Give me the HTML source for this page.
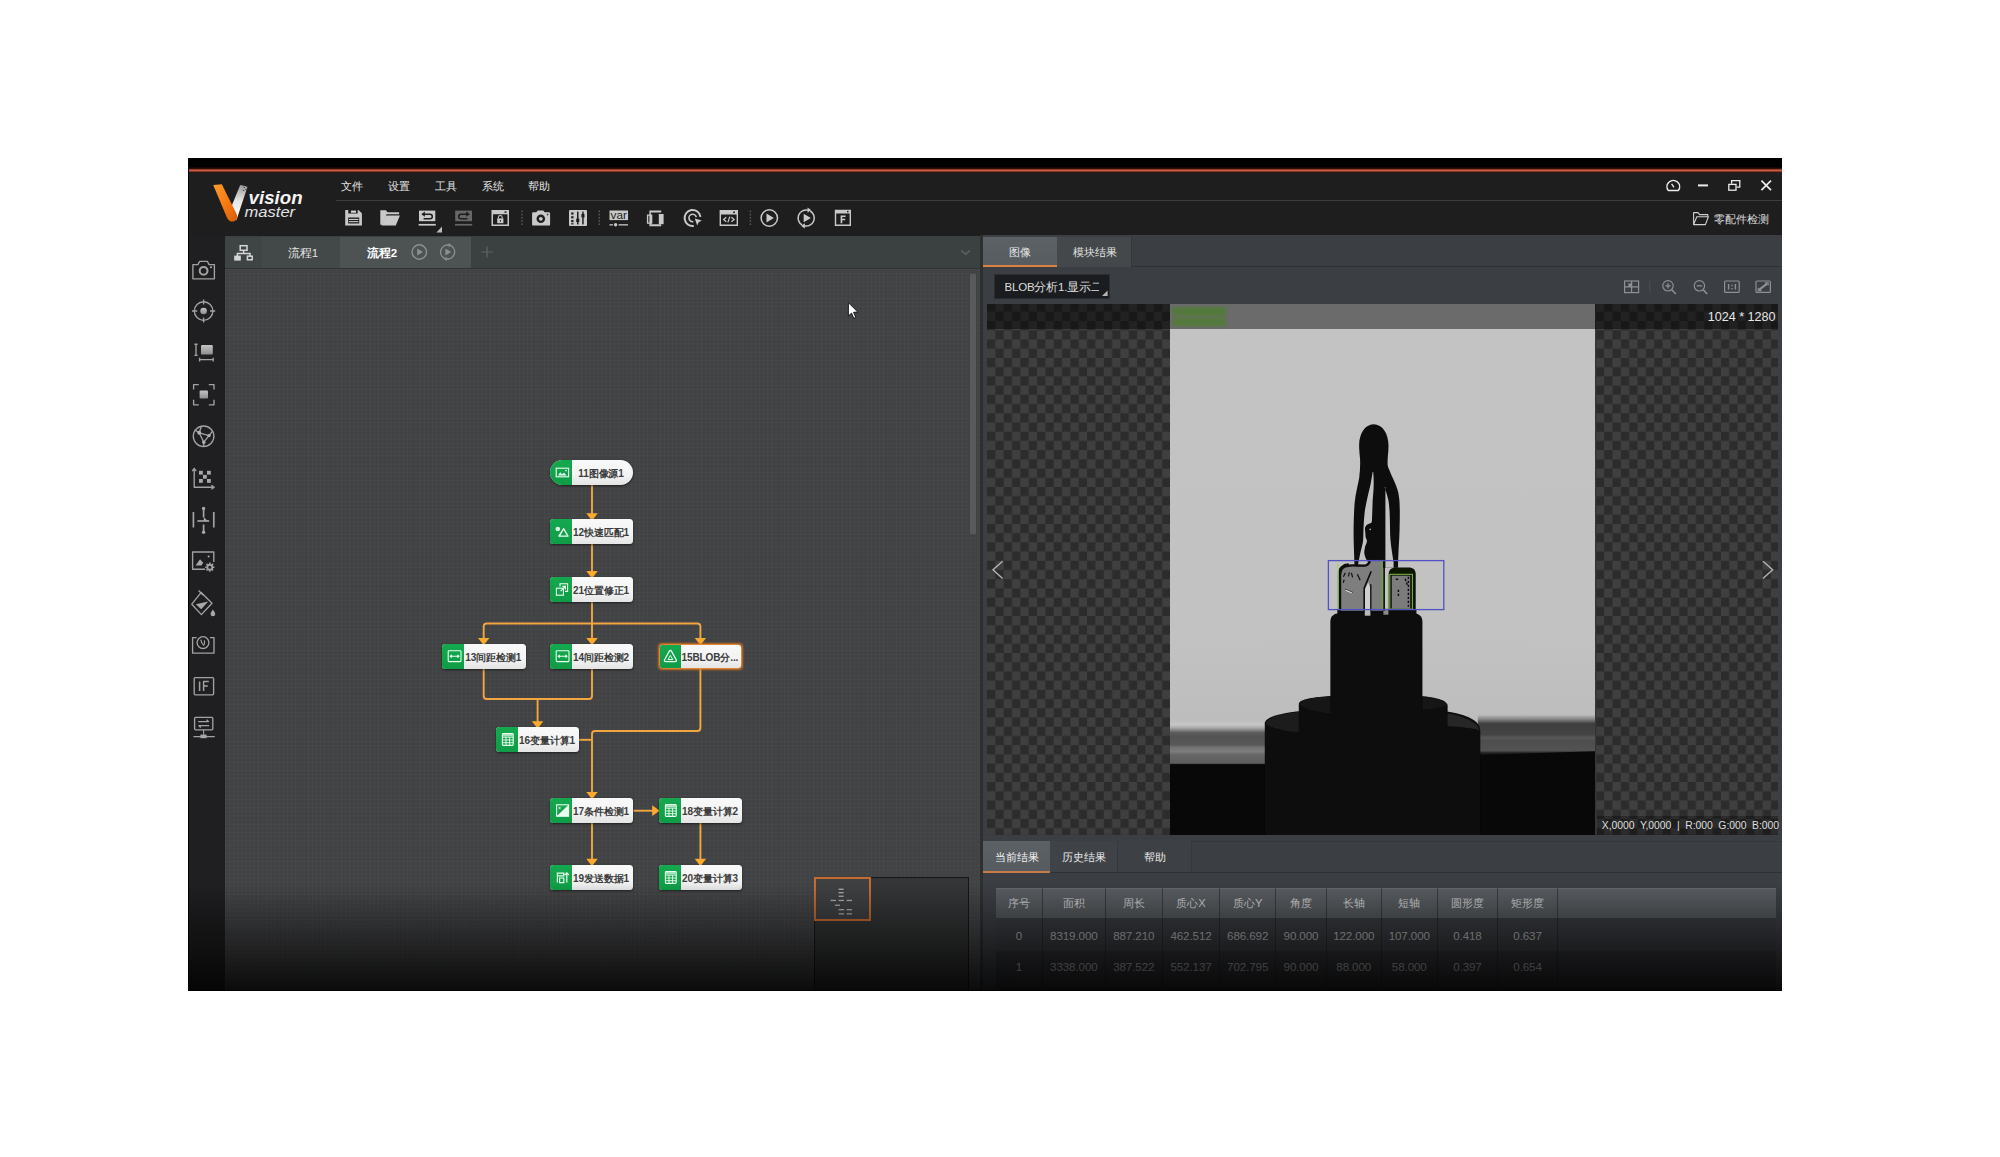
<!DOCTYPE html>
<html lang="zh">
<head>
<meta charset="utf-8">
<title>VisionMaster</title>
<style>
*{box-sizing:border-box;margin:0;padding:0}
html,body{width:2000px;height:1157px;background:#fff;overflow:hidden}
body{font-family:"Liberation Sans",sans-serif;position:relative;color:#ddd}
.abs{position:absolute}
#app{position:absolute;left:188px;top:158px;width:1594px;height:832.5px;background:#1e1e1f;overflow:hidden}
/* everything inside #app is positioned in page coords via this wrapper */
#w{position:absolute;left:-188px;top:-158px;width:2000px;height:1157px}
#topblack{left:188px;top:158px;width:1594px;height:10px;background:#000}
#topline{left:188px;top:167px;width:1594px;height:6px;background:linear-gradient(#000 0%,#3a1108 30%,#d9634a 52%,#c9573f 66%,#45170d 82%,#1e1e1f 100%)}
#hdr{left:188px;top:172px;width:1594px;height:64px;background:#1e1e1f}
#menusep{left:336px;top:199.5px;width:1446px;height:1px;background:#3d3d3d}
.menu{top:179px;height:15px;line-height:15px;font-size:11px;color:#e4e4e4;white-space:nowrap}
#side{left:188px;top:236px;width:37px;height:756px;background:#1f1f21}
#ltabs{left:225px;top:236px;width:754.5px;height:33px;background:#3b4040;border-bottom:1px solid #2f3333}
#canvas{left:225px;top:269px;width:754.5px;height:722px;background-color:#414244;
 background-image:linear-gradient(rgba(255,255,255,.025) 1px,transparent 1px),linear-gradient(90deg,rgba(255,255,255,.025) 1px,transparent 1px);background-size:4.15px 4.15px}
#split{left:979.5px;top:235px;width:3.5px;height:756px;background:#2d2f31}
#rpanel{left:983px;top:235px;width:799px;height:756px;background:#3b3e43}
#rtabs{left:983px;top:235px;width:799px;height:32px;background:#3b3e43;border-bottom:1px solid #2e3035}
.tab{top:237px;height:30px;line-height:30px;text-align:center;font-size:11px;color:#e6e6e6}
#imgarea{left:986.6px;top:304.3px;width:791.8px;height:530.7px;overflow:hidden;
 background:#2c2c2c}
#fade{left:188px;top:884px;width:1594px;height:107px;background:linear-gradient(rgba(0,0,0,0),rgba(0,0,0,.84));pointer-events:none}
</style>
</head>
<body>
<div id="app"><div id="w">
 <div id="topblack" class="abs"></div>
 <div id="hdr" class="abs"></div>
 <div id="topline" class="abs"></div>
 <div id="menusep" class="abs"></div>
 <div class="abs menu" style="left:341px">文件</div>
 <div class="abs menu" style="left:388px">设置</div>
 <div class="abs menu" style="left:435px">工具</div>
 <div class="abs menu" style="left:481.5px">系统</div>
 <div class="abs menu" style="left:528px">帮助</div>
 <!--LOGO-->
 <svg class="abs" style="left:0;top:0" width="2000" height="1157" viewBox="0 0 2000 1157">
  <defs>
   <linearGradient id="lgO" x1="0" y1="0" x2="1" y2="1"><stop offset="0" stop-color="#ff9a2a"/><stop offset=".55" stop-color="#f57a12"/><stop offset="1" stop-color="#d45a08"/></linearGradient>
   <linearGradient id="lgW" x1="0" y1="1" x2="0" y2="0"><stop offset="0" stop-color="#ffffff"/><stop offset=".55" stop-color="#e6e6e6"/><stop offset="1" stop-color="#9a9a9a"/></linearGradient>
  </defs>
  <!-- logo -->
  <g>
   <path d="M247.6 186.6 L240.2 184.9 L230.4 209 L236.4 220.2 Z" fill="url(#lgW)"/>
   <path d="M213.2 185.0 L221.8 184.2 L236.6 214.0 C238.2 218.4 236.0 221.6 232.6 221.6 C229.6 221.6 228.2 220.2 226.8 217.2 Z" fill="url(#lgO)"/>
   <path d="M243.5 187 l1.6 .9 M246 186 l1.6 .9 M242.6 190 l1.6 .9 M245.2 189.3 l1.6 .9" stroke="#1e1e1f" stroke-width=".8"/>
   <text x="248.6" y="204.4" font-family="Liberation Sans, sans-serif" font-style="italic" font-weight="bold" font-size="18.6" fill="#f4f4f4" textLength="54" lengthAdjust="spacingAndGlyphs">vision</text>
   <text x="244.6" y="216.6" font-family="Liberation Sans, sans-serif" font-style="italic" font-size="15.2" fill="#e2e2e2" textLength="50.5" lengthAdjust="spacingAndGlyphs">master</text>
  </g>
  <!-- toolbar icons -->
  <g fill="#c9c9c9" stroke="none">
   <!-- save -->
   <path d="M345.2 210h13.2l3.5 3.3v12.3h-16.7z M348.3 210v3.4h9.4v-3.4z M348.2 217.6v5.8h11v-5.8z" fill-rule="evenodd"/>
   <rect x="349" y="218.9" width="9.4" height="1.1"/><rect x="349" y="221.1" width="9.4" height="1.1"/>
   <rect x="351" y="210.6" width="5" height="2.1" fill="#d8d8d8"/>
   <!-- folder -->
   <path d="M380.3 210.3h5.6l1.6 1.9h11.6v2h-12.6l-4.2 10.6h-2z"/>
   <path d="M385.6 215.4h14.3l-4.1 10.2h-14.2z"/>
   <!-- undo -->
   <rect x="419" y="210.6" width="16.3" height="10.6"/>
   <rect x="418.6" y="223.9" width="17.2" height="1.7"/>
   <path d="M422.4 214.2h7.6a2.3 2.3 0 0 1 0 4.6h-6.4" fill="none" stroke="#1e1e1f" stroke-width="1.5"/>
   <path d="M424.9 211.6l-3.6 2.6 3.6 2.6z" fill="#1e1e1f"/>
   <path d="M442 226.4v6.2h-5.6z" fill="#bdbdbd"/>
   <!-- redo (disabled) -->
   <g fill="#676767"><rect x="455.2" y="210.6" width="16.8" height="10.6"/><rect x="455" y="223.9" width="17.2" height="1.7"/></g>
   <path d="M468.6 214.2h-7.6a2.3 2.3 0 0 0 0 4.6h6.4" fill="none" stroke="#1e1e1f" stroke-width="1.5"/>
   <path d="M466.2 211.6l3.6 2.6-3.6 2.6z" fill="#1e1e1f"/>
   <!-- lock window -->
   <path d="M491.5 210h17.5v15.9h-17.5z M493 214.2v10.2h14.5v-10.2z" fill-rule="evenodd"/>
   <rect x="504.6" y="211.3" width="1.8" height="1.6" fill="#1e1e1f"/>
   <rect x="497.2" y="218.4" width="6.2" height="4.8"/>
   <path d="M498.4 218.6v-1.2a1.9 1.9 0 0 1 3.8 0v1.2" fill="none" stroke="#c9c9c9" stroke-width="1.1"/>
   <rect x="499.9" y="220" width=".9" height="1.8" fill="#1e1e1f"/>
   <!-- camera -->
   <path d="M532.1 213.4q0-1.2 1.2-1.2h3l1.4-1.8h5.6l1.4 1.8h4.2q1.2 0 1.2 1.2v11q0 1.2-1.2 1.2h-15.6q-1.2 0-1.2-1.200z"/>
   <circle cx="540.8" cy="218.8" r="4.3" fill="#1e1e1f"/><circle cx="540.8" cy="218.8" r="1.9"/>
   <circle cx="547.6" cy="214.6" r=".8" fill="#1e1e1f"/>
   <!-- sliders -->
   <rect x="569" y="210" width="18" height="15.9" rx="1"/>
   <g fill="#1e1e1f"><rect x="571.2" y="212.4" width="2.3" height="2.2"/><rect x="571.2" y="216.2" width="2.3" height="2.2"/><rect x="571.2" y="220" width="2.3" height="2.2"/><rect x="571.2" y="223.2" width="2.3" height="1.2"/>
    <rect x="577" y="211.6" width="1.5" height="12.8"/><rect x="582.2" y="211.6" width="1.5" height="12.8"/><rect x="576.2" y="218.6" width="3.1" height="3.4"/><rect x="581.4" y="214" width="3.1" height="3.4"/></g>
   <!-- var -->
   <rect x="609.5" y="210.5" width="18.5" height="9.6"/>
   <text x="610.6" y="218.6" font-family="Liberation Sans, sans-serif" font-size="10.5" fill="#1e1e1f" textLength="16.4" lengthAdjust="spacingAndGlyphs">var</text>
   <rect x="609.5" y="224.2" width="3.4" height="1.3"/><circle cx="615.6" cy="224.8" r="1.7"/><rect x="618.6" y="224.2" width="9.4" height="1.3"/>
   <!-- device -->
   <path d="M649.4 210.6h11.8v2h-10.3v11.6h10.300v2.100h-11.800z"/>
   <path d="M646.900 214.4h5.400v9.400h-5.400z M648.300 215.800v6.600h1.700v-6.600z" fill-rule="evenodd"/>
   <rect x="658.800" y="214" width="4.800" height="10.200"/>
   <!-- target cursor -->
   <path d="M700.500 216.800 A8 8 0 1 0 693.800 225.900" fill="none" stroke="#c9c9c9" stroke-width="2"/>
   <path d="M696.300 217.200 A3.700 3.700 0 1 0 693.300 221.600" fill="none" stroke="#c9c9c9" stroke-width="1.600"/>
   <path d="M694.800 218.600l7 1.900-3.100 1.700-1.500 3.400z"/>
   <!-- code window -->
   <path d="M719.600 210.100h18.400v15.800h-18.400z M721 214.600v9.900h15.600v-9.900z" fill-rule="evenodd"/>
   <rect x="733.200" y="211.500" width="1.700" height="1.600" fill="#1e1e1f"/>
   <path d="M726.300 217.200l-2.700 2.300 2.700 2.300 M731.400 217.200l2.700 2.300-2.700 2.300 M729.800 216.600l-1.900 5.800" fill="none" stroke="#c9c9c9" stroke-width="1.250"/>
   <!-- play -->
   <circle cx="769.300" cy="218" r="8.200" fill="none" stroke="#c9c9c9" stroke-width="1.500"/>
   <path d="M766.500 213.600l7.400 4.400-7.400 4.400z"/>
   <!-- loop play -->
   <path d="M802.15 225.01 A8.1 8.1 0 0 1 808.02 210.11 M810.25 210.99 A8.1 8.1 0 0 1 804.38 225.89" fill="none" stroke="#c9c9c9" stroke-width="1.500"/>
   <path d="M807.52 207.41l3.65 2.70l-3.65 2.56z M804.88 228.59l-3.65 -2.70l3.65 -2.56z"/>
   <path d="M803.700 213.700l7.200 4.300-7.200 4.300z"/>
   <!-- F window -->
   <path d="M834.800 209.700h16.200v16.200h-16.200z M836.200 213.600v10.900h13.400v-10.900z" fill-rule="evenodd"/>
   <rect x="847" y="210.900" width="1.500" height="1.500" fill="#1e1e1f"/>
   <path d="M840.600 215.600h5v1.500h-3.300v1.700h2.900v1.400h-2.900v3h-1.700z"/>
  </g>
  <!-- dotted separators -->
  <g fill="#5a5a5a">
   <rect x="521.300" y="210.600" width="1.400" height="1.600"/><rect x="521.300" y="213.800" width="1.400" height="1.600"/><rect x="521.300" y="217" width="1.400" height="1.600"/><rect x="521.300" y="220.200" width="1.400" height="1.600"/><rect x="521.300" y="223.400" width="1.400" height="1.600"/>
   <rect x="598.600" y="210.600" width="1.400" height="1.600"/><rect x="598.600" y="213.800" width="1.400" height="1.600"/><rect x="598.600" y="217" width="1.400" height="1.600"/><rect x="598.600" y="220.200" width="1.400" height="1.600"/><rect x="598.600" y="223.400" width="1.400" height="1.600"/>
   <rect x="749.700" y="210.600" width="1.400" height="1.600"/><rect x="749.700" y="213.800" width="1.400" height="1.600"/><rect x="749.700" y="217" width="1.400" height="1.600"/><rect x="749.700" y="220.200" width="1.400" height="1.600"/><rect x="749.700" y="223.400" width="1.400" height="1.600"/>
  </g>
 </svg>
 <!--TOOLBAR-->
 <!--WINCTRL-->
 <svg class="abs" style="left:0;top:0" width="2000" height="1157" viewBox="0 0 2000 1157">
  <g fill="none" stroke="#ececec" stroke-width="1.500">
   <!-- gauge -->
   <path d="M1668.200 190.400h10.200a6.300 6.300 0 1 0-10.200 0z" stroke-linejoin="round"/>
   <path d="M1671.600 183.800l2.400 3.600" stroke-width="1.300"/>
   <!-- minimize -->
   <path d="M1698 185.400h10" stroke-width="2"/>
   <!-- restore -->
   <rect x="1728.800" y="184.400" width="7.200" height="5.800" stroke-width="1.300"/>
   <path d="M1731.600 183.800v-3.200h8.200v6.600h-3.200" stroke-width="1.300"/>
   <!-- close -->
   <path d="M1761.400 180.600l9.600 9.600 M1771 180.600l-9.600 9.600" stroke-width="1.700"/>
   <!-- folder -->
   <path d="M1693.600 224.600v-12h4.400l1.600 2h8.200v2.200 M1693.600 224.600l3.200-7.800h11.600l-3 7.800z" stroke="#d0d0d0" stroke-width="1.100" stroke-linejoin="round"/>
  </g>
 </svg>
 <div class="abs" style="left:1714px;top:211.500px;height:15px;line-height:15px;font-size:11px;color:#dcdcdc;white-space:nowrap">零配件检测</div>
 <div id="side" class="abs"></div>
 <!--SIDEICONS-->
 <svg class="abs" style="left:0;top:0" width="2000" height="1157" viewBox="0 0 2000 1157">
  <defs><linearGradient id="sg" x1="0" y1="0" x2="0" y2="1"><stop offset="0" stop-color="#c4c4c4"/><stop offset="1" stop-color="#8c8c8c"/></linearGradient></defs>
  <g fill="none" stroke="#a2a2a2" stroke-width="1.35" stroke-linejoin="round">
   <!-- camera -->
   <path d="M192.900 264.600h5l1.800-3.300h7.600l1.800 3.300h5.300v14.200h-21.500z"/>
   <circle cx="203.600" cy="270.800" r="3.900" stroke-width="2"/>
   <circle cx="211" cy="267.200" r=".9" fill="#cfcfcf" stroke="none"/>
   <!-- target -->
   <circle cx="203.600" cy="311" r="9.300"/>
   <path d="M203.600 299.400v5.200 M203.600 317.400v5.200 M192 311h5.200 M210 311h5.200"/>
   <circle cx="203.600" cy="311" r="3.300" fill="url(#sg)" stroke="none"/>
   <!-- measure -->
   <path d="M194.400 344.200h3.200 M194.400 355.400h3.200 M196 344.200v11.200 M199.600 357.800v3.600 M213.200 357.800v3.600 M199.600 359.600h13.600"/>
   <rect x="201" y="345" width="11.800" height="9.600" rx="1.200" fill="url(#sg)" stroke="none"/>
   <!-- focus -->
   <path d="M193.600 389.600v-5h5.200 M208.800 384.600h5.200v5 M214 399.800v5h-5.200 M198.800 404.800h-5.200v-5"/>
   <rect x="199.600" y="390.400" width="8.400" height="8.200" rx="1" fill="url(#sg)" stroke="none"/>
   <!-- globe nodes -->
   <circle cx="203.600" cy="436.300" r="10.300"/>
   <path d="M199.200 432.800l9.800 2.800-5.200 6.600z M199.200 432.800l-4.600-3 M209 435.600l3.800-4.600 M203.800 442.200l-.2 4 M199.200 432.800l2-6"/>
   <circle cx="199.200" cy="432.800" r="2" fill="#b0b0b0" stroke="none"/><circle cx="209" cy="435.600" r="1.700" fill="#b0b0b0" stroke="none"/><circle cx="203.800" cy="442.200" r="1.700" fill="#b0b0b0" stroke="none"/>
   <!-- axes checker -->
   <path d="M194.200 469v18.200h18.800 M192.200 471.200l2-2.800 2 2.800 M211.400 485.200l2.800 2-2.800 2"/>
   <g fill="#a8a8a8" stroke="none"><rect x="199" y="470.800" width="3.800" height="3.800"/><rect x="207" y="470.800" width="3.800" height="3.800"/><rect x="203" y="474.900" width="3.800" height="3.800"/><rect x="199" y="479" width="3.800" height="3.800"/><rect x="207" y="479" width="3.800" height="3.800"/></g>
   <!-- align -->
   <path d="M193.400 512v15.600 M213.800 512v15.600" stroke-width="1.700"/>
   <path d="M203.600 509v8.600 M203.600 524.400v7.200" stroke-width="1.700"/>
   <path d="M197.400 521h11.800" stroke-width="1.700"/>
   <path d="M203.800 517.200l4 3.800h-4z" fill="#a8a8a8" stroke="none"/>
   <circle cx="203.600" cy="508.400" r="1.700" fill="#a8a8a8" stroke="none"/><circle cx="203.600" cy="532.200" r="1.700" fill="#a8a8a8" stroke="none"/>
   <!-- image settings -->
   <path d="M205.200 569.200h-12.600v-17.200h21.200v10"/>
   <path d="M195.600 565.600l4.400-6.400 3.200 3.600-1.800 2.800z" fill="#a8a8a8" stroke="none"/>
   <circle cx="208.600" cy="556.600" r="1" fill="#a8a8a8" stroke="none"/>
   <circle cx="209.800" cy="567.200" r="2.500" stroke-width="1.900"/>
   <path d="M209.800 562.600v1.600 M209.800 570.200v1.600 M205.200 567.200h1.600 M212.800 567.200h1.600 M206.500 563.900l1.200 1.200 M211.900 569.300l1.200 1.200 M213.100 563.900l-1.200 1.200 M207.700 569.300l-1.200 1.200" stroke-width="1.500"/>
   <!-- bucket -->
   <path d="M201.200 592.400l10.800 10.800-10.600 11.400-9.600-10.400z M198.600 590.600l4.600 4.600"/>
   <path d="M195.800 604.200l12.400-2.600-7 7.600z" fill="#a8a8a8" stroke="none"/>
   <path d="M212.900 609.600c1.400 2.200 2.300 3.200 2.300 4.400a2.300 2.300 0 0 1-4.600 0c0-1.200.9-2.200 2.300-4.400z" fill="#a8a8a8" stroke="none"/>
   <!-- clock cam -->
   <path d="M196.600 637.600h-4v15.600h21.400v-15.600h-4"/>
   <circle cx="203" cy="642.600" r="5.900"/>
   <path d="M200.800 639.600c.4 2.800 1.400 4.600 3 5.600.8-1.200 1-3 .6-4.800" stroke-width="1.200"/>
   <!-- IF -->
   <rect x="194.200" y="677.600" width="19.400" height="17.200" rx="1"/>
   <path d="M199.600 681.600v9.400 M203.600 691v-9.400h5.200 M203.600 686h4.200" stroke-width="1.500"/>
   <!-- network -->
   <rect x="194.600" y="717.400" width="18.200" height="12.400" rx="1"/>
   <path d="M198.200 721.600h10.400l-2-1.900 M209.200 725.600h-10.400l2 1.900" stroke-width="1.300"/>
   <path d="M203.600 729.800v5 M193.400 736.600h21.400" stroke-width="1.100"/>
   <rect x="200.400" y="734.600" width="6.200" height="3.600" fill="#a8a8a8" stroke="none"/>
  </g>
 </svg>
 <div id="ltabs" class="abs"></div>
 <!--LTABS-->
 <div class="abs" style="left:225px;top:236.5px;width:37px;height:31.5px;background:#3f4444"></div>
 <div class="abs" style="left:262px;top:236.5px;width:78px;height:31.5px;background:#434848"></div>
 <div class="abs" style="left:340px;top:236.5px;width:130.5px;height:31.5px;background:#4d5252"></div>
 <div class="abs" style="left:262px;top:244.8px;width:78px;height:16px;line-height:16px;font-size:11.5px;color:#e2e2e2;text-align:center;padding-left:4px">流程1</div>
 <div class="abs" style="left:362px;top:244.8px;width:40px;height:16px;line-height:16px;font-size:11.5px;color:#fff;font-weight:bold;text-align:center;white-space:nowrap">流程2</div>
 <svg class="abs" style="left:0;top:0" width="2000" height="1157" viewBox="0 0 2000 1157">
  <!-- tree icon -->
  <g fill="none" stroke="#d6d6d6" stroke-width="1.5">
   <rect x="240.200" y="245.700" width="6.800" height="4.600"/>
   <path d="M243.600 250.300v3.200 M237.400 256v-2.500h12.600v2.500"/>
   <rect x="247.400" y="256.200" width="4.800" height="3.600"/>
  </g>
  <rect x="234.200" y="255.600" width="6.600" height="5" fill="#d6d6d6"/>
  <!-- play / loop -->
  <g fill="none" stroke="#8c9090" stroke-width="1.400">
   <circle cx="419.300" cy="252" r="7.200"/>
   <path d="M444.10 258.06 A7 7 0 0 1 449.17 245.18 M451.10 245.94 A7 7 0 0 1 446.03 258.82"/>
  </g>
  <g fill="#8c9090"><path d="M417.200 248.400l5.800 3.600-5.800 3.600z"/><path d="M445.400 248.400l5.800 3.600-5.800 3.600z"/><path d="M448.67 242.88l3.10 2.30l-3.10 2.18z M446.53 261.12l-3.10 -2.30l3.10 -2.18z"/></g>
  <path d="M481.400 252h11.200 M487 246.400v11.200" stroke="#5f6464" stroke-width="1.200"/>
  <path d="M961.200 250.400l4.400 4 4.400-4" fill="none" stroke="#5a5f5f" stroke-width="1.500"/>
 </svg>
 <div id="canvas" class="abs"></div>
 <!--FLOW-->
 <style>.nd{position:absolute;width:83.600px;height:24.700px;border-radius:3.500px;background:linear-gradient(#f9f9f9 0%,#f3f3f3 60%,#e4e4e4 100%);box-shadow:0 1px 2.500px rgba(0,0,0,.55);overflow:hidden}.nd.pill{border-radius:12.400px}.nd.sel{width:83px;height:25px;border:1.300px solid #e38634;box-shadow:0 0 2px 0.300px rgba(226,121,28,.8)}.nd i{position:absolute;left:0;top:0;width:22.200px;height:100%;background:linear-gradient(#14a94f,#0f9c46)}.nd svg{position:absolute;left:0;top:0}.nd b{position:absolute;left:22.200px;top:0;width:58px;height:100%;line-height:27.400px;font-size:10px;font-weight:bold;color:#3c3c3c;text-align:center;white-space:nowrap;letter-spacing:-.100px}.nd.sel b{line-height:25.200px;left:20.900px}.nd.sel i{width:20.900px}.nd.sel svg{left:-1.300px;top:-1.200px}</style>
 <svg class="abs" style="left:0;top:0" width="2000" height="1157" viewBox="0 0 2000 1157"><g fill="none" stroke="#f3a640" stroke-width="1.900"><path d="M592 485V519"/><path d="M592 544V577"/><path d="M592 602V644"/><path d="M592 623.500H486.700a3 3 0 0 0-3 3V644"/><path d="M592 623.500H697.400a3 3 0 0 1 3 3V644"/><path d="M483.700 668.500V696a3 3 0 0 0 3 3H589a3 3 0 0 0 3-3V668.500"/><path d="M537.600 699V727"/><path d="M700.400 668.500V728a3 3 0 0 1-3 3H595a3 3 0 0 0-3 3V798"/><path d="M579 739.800H592"/><path d="M592 822.500V865"/><path d="M700.400 822.500V865"/><path d="M633.500 810.700H654"/></g><g fill="#fbaa2e"><path d="M586.3 513.3h11.400L592.0 520.7z"/><path d="M586.3 571.0h11.400L592.0 578.4z"/><path d="M586.3 637.9h11.400L592.0 645.3z"/><path d="M478.0 637.9h11.400L483.7 645.3z"/><path d="M694.7 637.9h11.400L700.4 645.3z"/><path d="M531.9 721.3h11.400L537.6 728.7z"/><path d="M586.3 791.9h11.400L592.0 799.3z"/><path d="M586.3 858.8h11.400L592.0 866.2z"/><path d="M694.7 858.8h11.400L700.4 866.2z"/><path d="M652.200 805.300v10.800L659.800 810.700z"/></g></svg>
 <div class="nd pill" style="left:549.9px;top:460.3px"><i></i><svg width="24" height="25" viewBox="0 0 24 25"><rect x="6.2" y="8.2" width="12.4" height="8.6" fill="none" stroke="#eafff0" stroke-width="1.1"/><path d="M8 15.6l2.300-3.400 1.800 2 1.800-1.400 2.900 2.800z" fill="#eafff0"/><circle cx="16" cy="10.600" r=".8" fill="#eafff0"/></svg><b>11图像源1</b></div>
 <div class="nd " style="left:549.9px;top:519.3px"><i></i><svg width="24" height="25" viewBox="0 0 24 25"><circle cx="7.800" cy="10" r="2.300" fill="#d9f7e3"/><path d="M13.600 9.600l4.400 7.600h-8.800z" fill="none" stroke="#eafff0" stroke-width="1.300" stroke-linejoin="round"/><path d="M12 12.200l-3.400 5" stroke="#eafff0" stroke-width="1.100"/></svg><b>12快速匹配1</b></div>
 <div class="nd " style="left:549.9px;top:577.2px"><i></i><svg width="24" height="25" viewBox="0 0 24 25"><rect x="6.400" y="11.200" width="7" height="7" fill="none" stroke="#eafff0" stroke-width="1.100"/><path d="M10 9.600v-2.800h7.600v7.600h-2.600" fill="none" stroke="#eafff0" stroke-width="1.100"/><path d="M10.600 14.200l4.600-4.600 M12.400 9.400h3v3" fill="none" stroke="#eafff0" stroke-width="1.100"/></svg><b>21位置修正1</b></div>
 <div class="nd " style="left:442.0px;top:644.1px"><i></i><svg width="24" height="25" viewBox="0 0 24 25"><rect x="6.200" y="6.800" width="12.800" height="10.800" rx=".8" fill="none" stroke="#eafff0" stroke-width="1.100"/><path d="M8.400 12.200h8.400 M9.800 10.800l-1.600 1.400 1.600 1.400 M15.400 10.800l1.600 1.400-1.600 1.400" fill="none" stroke="#eafff0" stroke-width="1.100"/></svg><b>13间距检测1</b></div>
 <div class="nd " style="left:549.9px;top:644.1px"><i></i><svg width="24" height="25" viewBox="0 0 24 25"><rect x="6.200" y="6.800" width="12.800" height="10.800" rx=".8" fill="none" stroke="#eafff0" stroke-width="1.100"/><path d="M8.400 12.200h8.400 M9.800 10.800l-1.600 1.400 1.600 1.400 M15.400 10.800l1.600 1.400-1.600 1.400" fill="none" stroke="#eafff0" stroke-width="1.100"/></svg><b>14间距检测2</b></div>
 <div class="nd sel" style="left:659.0px;top:644.0px"><i></i><svg width="24" height="25" viewBox="0 0 24 25"><path d="M10.400 7.200q1-1.600 2 0l4.800 8.600q.8 1.800-1.200 1.800h-9.200q-2 0-1.200-1.800z" fill="none" stroke="#eafff0" stroke-width="1.300"/><path d="M11.400 11.400l2.400 4.200h-4.800z" fill="none" stroke="#eafff0" stroke-width="1"/></svg><b>15BLOB分...</b></div>
 <div class="nd " style="left:495.8px;top:727.4px"><i></i><svg width="24" height="25" viewBox="0 0 24 25"><rect x="6.400" y="6.600" width="10.800" height="11.800" rx=".8" fill="none" stroke="#eafff0" stroke-width="1.100"/><path d="M6.400 10.200h10.800 M6.400 13h10.800 M6.400 15.700h10.800 M10 10.200v8.200 M13.600 10.200v8.200" stroke="#eafff0" stroke-width=".9"/><rect x="6.900" y="7.100" width="9.800" height="2.300" fill="#d9f7e3" opacity=".75"/></svg><b>16变量计算1</b></div>
 <div class="nd " style="left:549.9px;top:798.1px"><i></i><svg width="24" height="25" viewBox="0 0 24 25"><rect x="6.600" y="6.800" width="12" height="11.400" fill="none" stroke="#eafff0" stroke-width="1.100"/><path d="M6.600 18.200l12-11.400v11.400z" fill="#eafff0"/><path d="M8.600 8.800l2 2.400 M10.600 8.800l-2 2.400" stroke="#eafff0" stroke-width=".8"/></svg><b>17条件检测1</b></div>
 <div class="nd " style="left:658.8px;top:798.1px"><i></i><svg width="24" height="25" viewBox="0 0 24 25"><rect x="6.400" y="6.600" width="10.800" height="11.800" rx=".8" fill="none" stroke="#eafff0" stroke-width="1.100"/><path d="M6.400 10.200h10.800 M6.400 13h10.800 M6.400 15.700h10.800 M10 10.200v8.200 M13.600 10.200v8.200" stroke="#eafff0" stroke-width=".9"/><rect x="6.900" y="7.100" width="9.800" height="2.300" fill="#d9f7e3" opacity=".75"/></svg><b>18变量计算2</b></div>
 <div class="nd " style="left:549.9px;top:864.9px"><i></i><svg width="24" height="25" viewBox="0 0 24 25"><path d="M7.400 8.200h6.400v2.600h-6.400z M7.400 10.800v6.800 M9.600 13h4.200v4.600h-4.200z M16.800 17.600v-9.600 M14.800 10l2-2.200 2 2.200" fill="none" stroke="#eafff0" stroke-width="1.200"/></svg><b>19发送数据1</b></div>
 <div class="nd " style="left:658.8px;top:864.9px"><i></i><svg width="24" height="25" viewBox="0 0 24 25"><rect x="6.400" y="6.600" width="10.800" height="11.800" rx=".8" fill="none" stroke="#eafff0" stroke-width="1.100"/><path d="M6.400 10.200h10.800 M6.400 13h10.800 M6.400 15.700h10.800 M10 10.200v8.200 M13.600 10.200v8.200" stroke="#eafff0" stroke-width=".9"/><rect x="6.900" y="7.100" width="9.800" height="2.300" fill="#d9f7e3" opacity=".75"/></svg><b>20变量计算3</b></div>
 <!--MINIMAP-->
 <div class="abs" style="left:969.6px;top:274px;width:6.7px;height:260px;background:#595a5c"></div>
 <div class="abs" style="left:813.900px;top:877.300px;width:155.600px;height:114px;background:#343536;border:1px solid #161616"></div>
 <div class="abs" style="left:813.900px;top:877.300px;width:57px;height:43.600px;background:#3f4042;border:2.200px solid #c76a30"></div>
 <svg class="abs" style="left:0;top:0" width="2000" height="1157" viewBox="0 0 2000 1157">
  <g fill="#d8d8d0" opacity=".72">
   <rect x="838.600" y="888.600" width="5" height="1.300"/><rect x="838.600" y="892" width="5" height="1.300"/><rect x="838.600" y="895.600" width="5" height="1.300"/>
   <rect x="830.600" y="899.800" width="5.400" height="1.300"/><rect x="838.600" y="899.800" width="5.400" height="1.300"/><rect x="846.600" y="899.800" width="5.400" height="1.300"/>
   <rect x="835" y="904.600" width="5" height="1.300"/>
   <rect x="838.600" y="909" width="5.400" height="1.300"/><rect x="846.600" y="909" width="5.400" height="1.300"/>
   <rect x="838.600" y="913.200" width="5.400" height="1.300"/><rect x="846.600" y="913.200" width="5.400" height="1.300"/>
  </g>
 </svg>
 <div id="split" class="abs"></div>
 <div id="rpanel" class="abs"></div>
 <div id="rtabs" class="abs"></div>
 <!--RTABS-->
 <div class="abs" style="left:983px;top:237px;width:74px;height:29.500px;background:linear-gradient(#5c6165,#575c60)"></div>
 <div class="abs" style="left:983px;top:265px;width:74px;height:2.200px;background:#d98243"></div>
 <div class="abs" style="left:1057px;top:237px;width:75px;height:29.500px;background:#44484a;border-right:1px solid #35383b"></div>
 <div class="abs tab" style="left:983px;width:74px;top:238px;height:28px;line-height:28px">图像</div>
 <div class="abs tab" style="left:1057px;width:75px;top:238px;height:28px;line-height:28px;color:#e0e0e0">模块结果</div>
 <!-- dropdown -->
 <div class="abs" style="left:994px;top:274px;width:116px;height:24.600px;background:#1b1c1f;border:1px solid #2b2d30"></div>
 <div class="abs" style="left:1004.500px;top:279.500px;height:14px;line-height:14px;font-size:11.500px;color:#dcdcdc;white-space:nowrap;width:94px;overflow:hidden;letter-spacing:-.2px">BLOB分析1.显示二</div>
 <svg class="abs" style="left:0;top:0" width="2000" height="1157" viewBox="0 0 2000 1157">
  <path d="M1107.600 290.400v5.600h-5.600z" fill="#b5b5b5"/>
  <g fill="none" stroke="#8d9194" stroke-width="1.200">
   <!-- grid -->
   <rect x="1624.600" y="281" width="14" height="11.600"/><path d="M1631.600 281v11.600 M1624.600 286.800h14"/>
   <rect x="1628.400" y="283.400" width="3.200" height="3.400" fill="#8d9194" stroke="none"/>
   <!-- zoom in -->
   <circle cx="1668" cy="285.800" r="5.200"/><path d="M1671.800 289.800l4 4.200" stroke-width="1.600"/><path d="M1665.400 285.800h5.200 M1668 283.200v5.200" stroke-width="1.300"/>
   <!-- zoom out -->
   <circle cx="1699.400" cy="285.800" r="5.200"/><path d="M1703.200 289.800l4 4.200" stroke-width="1.600"/><path d="M1696.800 285.800h5.200" stroke-width="1.300"/>
   <!-- 1:1 -->
   <rect x="1724.600" y="281" width="14.600" height="11.400" rx="1"/>
   <path d="M1728.600 284v5.600 M1735.400 284v5.600" stroke-width="1.400"/><rect x="1731.300" y="284.800" width="1.400" height="1.400" fill="#8d9194" stroke="none"/><rect x="1731.300" y="288" width="1.400" height="1.400" fill="#8d9194" stroke="none"/>
   <!-- fullscreen -->
   <rect x="1756" y="281" width="14.400" height="11.400" rx="1"/>
   <path d="M1759 289.800l8.400-6.400" stroke-width="2.200"/><path d="M1764.800 282.800h3.400v2.800 M1761.600 290.600h-3.400v-2.800" stroke-width="1.100"/>
  </g>
  <path d="M1649.800 281v11.600" stroke="#4b4f54" stroke-width="1"/>
 </svg>
 <!--RTOOLS-->
 <div id="imgarea" class="abs">
 <svg style="position:absolute;left:0;top:0" width="791.800" height="530.700"><defs><pattern id="ck" x="0" y="-1.400" width="16.680" height="18.440" patternUnits="userSpaceOnUse"><rect x="8.340" y="0" width="8.340" height="9.220" fill="#3f3f3f"/><rect x="0" y="9.220" width="8.340" height="9.220" fill="#3f3f3f"/></pattern></defs><rect width="791.800" height="530.700" fill="url(#ck)"/></svg>
 <!--PHOTO-->
 <svg style="position:absolute;left:183.600px;top:0" width="424.800" height="530.700" viewBox="1170.200 304.300 424.800 530.700">
  <defs>
   <linearGradient id="flL" gradientUnits="userSpaceOnUse" x1="0" y1="720" x2="0" y2="766"><stop offset="0.000" stop-color="#c4c4c4" stop-opacity="0"/><stop offset="0.109" stop-color="#c6c6c6"/><stop offset="0.174" stop-color="#aaaaaa"/><stop offset="0.283" stop-color="#5c5c5c"/><stop offset="0.370" stop-color="#525252"/><stop offset="0.543" stop-color="#585858"/><stop offset="0.609" stop-color="#747474"/><stop offset="0.696" stop-color="#7c7c7c"/><stop offset="0.761" stop-color="#666666"/><stop offset="0.946" stop-color="#5e5e5e"/><stop offset="0.967" stop-color="#2a2a2a"/><stop offset="1.000" stop-color="#080808"/></linearGradient>
   <linearGradient id="flR" gradientUnits="userSpaceOnUse" x1="0" y1="710" x2="0" y2="756"><stop offset="0.000" stop-color="#c0c0c0" stop-opacity="0"/><stop offset="0.109" stop-color="#bcbcbc"/><stop offset="0.196" stop-color="#8c8c8c"/><stop offset="0.304" stop-color="#3e3e3e"/><stop offset="0.543" stop-color="#444444"/><stop offset="0.609" stop-color="#585858"/><stop offset="0.674" stop-color="#4e4e4e"/><stop offset="0.891" stop-color="#525252"/><stop offset="0.935" stop-color="#262626"/><stop offset="1.000" stop-color="#080808"/></linearGradient>
   <linearGradient id="bgG" gradientUnits="userSpaceOnUse" x1="0" y1="304" x2="0" y2="720"><stop offset="0" stop-color="#c3c3c3"/><stop offset=".8" stop-color="#c2c2c2"/><stop offset="1" stop-color="#bdbdbd"/></linearGradient>
   <filter id="bl1" x="-5%" y="-5%" width="110%" height="110%"><feGaussianBlur stdDeviation=".55"/></filter>
   <filter id="bl2" x="-20%" y="-60%" width="140%" height="220%"><feGaussianBlur stdDeviation="1.500 1.300"/></filter>
  </defs>
  <rect x="1170" y="304" width="426" height="532" fill="url(#bgG)"/>
  <!-- floor -->
  <rect x="1170" y="720" width="100" height="46" fill="url(#flL)"/>
  <path d="M1478 710H1596V756H1478z" fill="url(#flR)"/>
  <path d="M1170 764.500H1268V836H1170z M1478 755.400L1596 751.600V836H1478z" fill="#080808"/>
  <!-- base tiers -->
  <g filter="url(#bl1)">
   <path d="M1265 723.500C1265 716 1290 711.500 1312 710.500H1434C1458 712 1480.500 718 1480.500 731V836H1265z" fill="#0a0a0a"/>
   <path d="M1265.600 723.600C1268 716.500 1290 712 1312 711L1300 733C1285 731.500 1270 728.500 1265.600 723.600z" fill="#1d1d1d"/>
   <path d="M1447 713.500C1462 716 1478 722 1480 730.500C1470 728 1456 726.500 1440 726.500z" fill="#262626"/>
   <path d="M1299 704C1299 699.500 1315 697 1331 696.200H1421C1436 697.500 1447.800 700.500 1447.800 706V738H1299z" fill="#0b0b0b"/>
   <path d="M1299.500 704.200C1302 699.800 1316 697.400 1331 696.600V713.500C1318 712 1304 709 1299.500 704.200z" fill="#191919"/>
   <path d="M1422 697C1434 698 1446 700.600 1447.300 705.800C1440 708 1430 709.500 1422 710z" fill="#171717"/>
   <path d="M1330.600 622C1330.600 616.500 1334 613.600 1340 613.600H1413C1419 613.600 1422.600 616.500 1422.600 622V712H1330.600z" fill="#090909"/>
  </g>
  <!-- pins between blobs and base -->
  <rect x="1337.600" y="610.300" width="79" height="5" fill="#0a0a0a" filter="url(#bl1)"/>
  <rect x="1365" y="608" width="5.600" height="8" fill="#b9b9b9" filter="url(#bl1)"/>
  <rect x="1383.600" y="609" width="5" height="6" fill="#8a8a8a" filter="url(#bl1)"/>
  <!-- silhouette -->
  <g filter="url(#bl1)">
   <path fill="#0c0c0c" d="M1373.900 424.600C1382.600 424.600 1388.700 434 1388.700 446C1388.700 453 1387.400 461 1387.800 465C1388.200 468 1391 473.500 1393.300 479C1395.500 484 1397.400 488 1398.400 492.500C1399.500 497 1399.900 503 1400 510C1400.100 520 1399.800 530 1399.500 537C1399.200 545 1398.500 552 1398.200 568H1354.800C1354.500 560 1354.200 552 1354 545C1353.700 535 1353.800 525 1354.100 517C1354.400 508 1354.800 502 1355.800 496C1357 489 1358.600 483 1359.400 478C1360.200 472 1360.500 466 1360.300 460C1360 455 1359.300 451 1359.300 446C1359.300 434 1365.200 424.600 1373.900 424.600z"/>
   <path fill="#c2c2c2" d="M1373.400 472.200C1373.900 477 1374 483 1373.800 488.500C1373.500 494 1373 498 1372.800 502.800C1372.600 508 1372.500 513 1372.300 517.100C1372.200 519.500 1372.300 521.500 1371.800 522.800C1370.500 524 1369 523.800 1367.600 524.700C1366.200 525.600 1365.300 527 1365.200 528.500C1365 531 1365.900 533.500 1365.700 536.100C1365.600 538.500 1367.300 539.500 1367.100 541.800C1366.900 544 1365.500 545.500 1365.200 547.500C1364.900 549.500 1364.300 551.500 1364.500 553.200C1364.800 555.500 1365.500 557.500 1366.200 559C1367 560.800 1368 562 1368.500 562.800L1369.500 566H1358L1358.600 562.800C1359.200 560 1359.800 556.500 1360.500 553.200C1361.500 549 1362.900 545 1363.300 540.900C1363.700 536 1363.500 531 1363.800 526.600C1364 522 1364.300 517 1364.900 512.300C1365.500 507.500 1366.600 503 1367.600 498.100C1368.700 493 1370 488.500 1370.900 483.800C1371.700 479.500 1372.400 476 1372.800 472.400z"/>
   <path fill="#c2c2c2" d="M1384.900 487.200C1386 491 1387.500 495.500 1388.500 500C1389.500 505 1389.800 511 1390 517.100C1390.200 523 1390.200 530 1390.400 536.100C1390.600 541 1391.300 546 1391.900 550.400C1392.500 555 1393.300 559 1393.800 562.800V568H1385.600V487.600z"/>
   <circle cx="1370.400" cy="529.600" r=".85" fill="#b0b0b0"/>
  </g>
  <!-- blobs -->
  <g filter="url(#bl1)">
   <path d="M1339 611V574C1339 568.500 1343 565.200 1349 565.200H1366.500C1369 565 1370.400 563 1370.600 560.600H1383.300V611z" fill="#7e7e7e"/>
   <path d="M1339.600 611V575C1339.600 569 1343.500 565.600 1349 565.400" fill="none" stroke="#0a0a0a" stroke-width="3.600"/>
   <path d="M1347 566.200C1354 564.600 1361 566.800 1366 565.600C1369 564.600 1370.200 562.600 1369.400 560" fill="none" stroke="#0a0a0a" stroke-width="2.400"/>
   <path d="M1343.600 577l2-4 M1348.600 576.600l1-4 M1352.800 577.600l-1.200-4.400 M1357.600 574.600l2.800 6 M1343.400 583l1-3" stroke="#101010" stroke-width="1.200"/>
   <path d="M1371.400 571.600L1364.400 588.500V611" fill="none" stroke="#0a0a0a" stroke-width="1.600"/>
   <path d="M1365.200 611V589.500L1368.400 582.600L1370.600 588.500V611z" fill="#d0d0d0"/>
   <path d="M1371 584.500V611" stroke="#0a0a0a" stroke-width="1.300"/>
   <path d="M1346 590.400l6 2.600" stroke="#e8e8e8" stroke-width="1.300"/><path d="M1345.400 589.400l7.600 3.200" stroke="#1a1a1a" stroke-width=".7"/>
   <path d="M1388.900 611V574.500C1388.900 570 1392 567.900 1396 567.900H1409C1413 567.900 1415.900 570 1415.900 574.500V611z" fill="#0a1206"/>
   <rect x="1392" y="576" width="18.400" height="33" fill="#7c7c7c"/>
   <path d="M1408.600 577v30 M1405.400 579l2 6 M1398.600 590v7 M1396 579.600h3" stroke="#0f0f0f" stroke-width="1.500" stroke-dasharray="2.400 1.600"/>
   <path d="M1384.300 560.500V611" stroke="#0a0a0a" stroke-width="1.700"/>
  </g>
  <!-- green outlines -->
  <g fill="none" filter="url(#bl1)">
   <path d="M1338.200 564V610.200" stroke="#a6cf86" stroke-width="1.600"/>
   <path d="M1382.200 560.800V610.200" stroke="#6f9f40" stroke-width="1.400"/>
   <rect x="1390" y="574.600" width="22.600" height="34.800" stroke="#86b84e" stroke-width="1"/>
   <path d="M1386.600 576V606" stroke="#b5d89a" stroke-width="1.600" opacity=".55"/>
  </g>
  <!-- blue roi -->
  <rect x="1328.600" y="560.900" width="115.400" height="49" fill="none" stroke="#5252c4" stroke-width="1.300"/>
  <!-- green text blotch -->
 </svg>
 <div style="position:absolute;left:0;top:0;width:100%;height:24.400px;background:rgba(0,0,0,.45)"></div>
 <svg style="position:absolute;left:183.600px;top:0" width="80" height="30" viewBox="1170.200 304.300 80 30"><g filter="url(#bl2)" fill="#468223" opacity=".62"><rect x="1172.600" y="307.300" width="54" height="9"/><rect x="1172.600" y="317.800" width="54" height="9"/></g></svg>
 </div>
 <!--IMGOVER-->
 <div class="abs" style="left:1640px;top:308.500px;width:135.600px;height:16px;line-height:16px;font-size:12.600px;color:#e8e8e8;text-align:right;white-space:nowrap">1024 * 1280</div>
 <div class="abs" style="left:1597px;top:815.500px;width:181.400px;height:19.500px;background:rgba(0,0,0,.3)"></div>
 <div class="abs" style="left:1590px;top:818.500px;width:189px;height:13px;line-height:13px;font-size:10.400px;color:#dedede;text-align:right;white-space:pre;letter-spacing:-.05px">X,0000  Y,0000  |  R:000  G:000  B:000</div>
 <svg class="abs" style="left:0;top:0" width="2000" height="1157" viewBox="0 0 2000 1157">
  <path d="M1002.600 561.200l-9.600 8.600 9.600 8.600 M1763 561.200l9.600 8.600-9.600 8.600" fill="none" stroke="#b4b4b4" stroke-width="1.400"/>
 </svg>
 <!--BOTTOM-->
 <div class="abs" style="left:983px;top:840.500px;width:799px;height:32.500px;background:#3b3e43;border-top:1px solid #33363a;border-bottom:1px solid #2e3035"></div>
 <div class="abs" style="left:983px;top:841px;width:67px;height:30.500px;background:linear-gradient(#5c6165,#565b5f)"></div>
 <div class="abs" style="left:983px;top:870.800px;width:67px;height:1.800px;background:#c77c48"></div>
 <div class="abs" style="left:1050px;top:841px;width:67.500px;height:31px;background:#3f4246;border-right:1px solid #34373b"></div>
 <div class="abs" style="left:1117.500px;top:841px;width:74.500px;height:31px;background:#3d4044;border-right:1px solid #34373b"></div>
 <div class="abs" style="left:983px;top:849px;width:67px;height:16px;line-height:16px;font-size:11.400px;color:#f0f0f0;text-align:center;white-space:nowrap">当前结果</div>
 <div class="abs" style="left:1050px;top:849px;width:67.5px;height:16px;line-height:16px;font-size:11.400px;color:#e6e6e6;text-align:center;white-space:nowrap">历史结果</div>
 <div class="abs" style="left:1117.5px;top:849px;width:74.5px;height:16px;line-height:16px;font-size:11.400px;color:#e6e6e6;text-align:center;white-space:nowrap">帮助</div>
 <div class="abs" style="left:995.600px;top:887.800px;width:780.400px;height:30.400px;background:linear-gradient(#595d61,#53575b);border-top:1px solid #62666a"></div>
 <div class="abs" style="left:995.600px;top:918.200px;width:780.400px;height:33px;background:#393b3f"></div>
 <div class="abs" style="left:995.600px;top:951.200px;width:780.400px;height:40px;background:#313236"></div>
 <div class="abs" style="left:1042px;top:888px;width:1px;height:103px;background:rgba(20,22,25,.45)"></div>
 <div class="abs" style="left:995.6px;top:896px;width:46.9px;height:15px;line-height:15px;font-size:11.200px;color:#c9cbcd;text-align:center;white-space:nowrap">序号</div>
 <div class="abs" style="left:995.6px;top:927.500px;width:46.9px;height:15px;line-height:15px;font-size:11.600px;color:#b4b6b8;text-align:center;white-space:nowrap;letter-spacing:-.1px">0</div>
 <div class="abs" style="left:995.6px;top:959px;width:46.9px;height:15px;line-height:15px;font-size:11.600px;color:#b0b2b4;text-align:center;white-space:nowrap;letter-spacing:-.1px">1</div>
 <div class="abs" style="left:1104.7px;top:888px;width:1px;height:103px;background:rgba(20,22,25,.45)"></div>
 <div class="abs" style="left:1042.5px;top:896px;width:62.7px;height:15px;line-height:15px;font-size:11.200px;color:#c9cbcd;text-align:center;white-space:nowrap">面积</div>
 <div class="abs" style="left:1042.5px;top:927.500px;width:62.7px;height:15px;line-height:15px;font-size:11.600px;color:#b4b6b8;text-align:center;white-space:nowrap;letter-spacing:-.1px">8319.000</div>
 <div class="abs" style="left:1042.5px;top:959px;width:62.7px;height:15px;line-height:15px;font-size:11.600px;color:#b0b2b4;text-align:center;white-space:nowrap;letter-spacing:-.1px">3338.000</div>
 <div class="abs" style="left:1161.9px;top:888px;width:1px;height:103px;background:rgba(20,22,25,.45)"></div>
 <div class="abs" style="left:1105.2px;top:896px;width:57.2px;height:15px;line-height:15px;font-size:11.200px;color:#c9cbcd;text-align:center;white-space:nowrap">周长</div>
 <div class="abs" style="left:1105.2px;top:927.500px;width:57.2px;height:15px;line-height:15px;font-size:11.600px;color:#b4b6b8;text-align:center;white-space:nowrap;letter-spacing:-.1px">887.210</div>
 <div class="abs" style="left:1105.2px;top:959px;width:57.2px;height:15px;line-height:15px;font-size:11.600px;color:#b0b2b4;text-align:center;white-space:nowrap;letter-spacing:-.1px">387.522</div>
 <div class="abs" style="left:1219.1px;top:888px;width:1px;height:103px;background:rgba(20,22,25,.45)"></div>
 <div class="abs" style="left:1162.4px;top:896px;width:57.2px;height:15px;line-height:15px;font-size:11.200px;color:#c9cbcd;text-align:center;white-space:nowrap">质心X</div>
 <div class="abs" style="left:1162.4px;top:927.500px;width:57.2px;height:15px;line-height:15px;font-size:11.600px;color:#b4b6b8;text-align:center;white-space:nowrap;letter-spacing:-.1px">462.512</div>
 <div class="abs" style="left:1162.4px;top:959px;width:57.2px;height:15px;line-height:15px;font-size:11.600px;color:#b0b2b4;text-align:center;white-space:nowrap;letter-spacing:-.1px">552.137</div>
 <div class="abs" style="left:1275.2px;top:888px;width:1px;height:103px;background:rgba(20,22,25,.45)"></div>
 <div class="abs" style="left:1219.6px;top:896px;width:56.1px;height:15px;line-height:15px;font-size:11.200px;color:#c9cbcd;text-align:center;white-space:nowrap">质心Y</div>
 <div class="abs" style="left:1219.6px;top:927.500px;width:56.1px;height:15px;line-height:15px;font-size:11.600px;color:#b4b6b8;text-align:center;white-space:nowrap;letter-spacing:-.1px">686.692</div>
 <div class="abs" style="left:1219.6px;top:959px;width:56.1px;height:15px;line-height:15px;font-size:11.600px;color:#b0b2b4;text-align:center;white-space:nowrap;letter-spacing:-.1px">702.795</div>
 <div class="abs" style="left:1325.8px;top:888px;width:1px;height:103px;background:rgba(20,22,25,.45)"></div>
 <div class="abs" style="left:1275.7px;top:896px;width:50.6px;height:15px;line-height:15px;font-size:11.200px;color:#c9cbcd;text-align:center;white-space:nowrap">角度</div>
 <div class="abs" style="left:1275.7px;top:927.500px;width:50.6px;height:15px;line-height:15px;font-size:11.600px;color:#b4b6b8;text-align:center;white-space:nowrap;letter-spacing:-.1px">90.000</div>
 <div class="abs" style="left:1275.7px;top:959px;width:50.6px;height:15px;line-height:15px;font-size:11.600px;color:#b0b2b4;text-align:center;white-space:nowrap;letter-spacing:-.1px">90.000</div>
 <div class="abs" style="left:1380.7px;top:888px;width:1px;height:103px;background:rgba(20,22,25,.45)"></div>
 <div class="abs" style="left:1326.3px;top:896px;width:54.9px;height:15px;line-height:15px;font-size:11.200px;color:#c9cbcd;text-align:center;white-space:nowrap">长轴</div>
 <div class="abs" style="left:1326.3px;top:927.500px;width:54.9px;height:15px;line-height:15px;font-size:11.600px;color:#b4b6b8;text-align:center;white-space:nowrap;letter-spacing:-.1px">122.000</div>
 <div class="abs" style="left:1326.3px;top:959px;width:54.9px;height:15px;line-height:15px;font-size:11.600px;color:#b0b2b4;text-align:center;white-space:nowrap;letter-spacing:-.1px">88.000</div>
 <div class="abs" style="left:1436.9px;top:888px;width:1px;height:103px;background:rgba(20,22,25,.45)"></div>
 <div class="abs" style="left:1381.2px;top:896px;width:56.2px;height:15px;line-height:15px;font-size:11.200px;color:#c9cbcd;text-align:center;white-space:nowrap">短轴</div>
 <div class="abs" style="left:1381.2px;top:927.500px;width:56.2px;height:15px;line-height:15px;font-size:11.600px;color:#b4b6b8;text-align:center;white-space:nowrap;letter-spacing:-.1px">107.000</div>
 <div class="abs" style="left:1381.2px;top:959px;width:56.2px;height:15px;line-height:15px;font-size:11.600px;color:#b0b2b4;text-align:center;white-space:nowrap;letter-spacing:-.1px">58.000</div>
 <div class="abs" style="left:1497px;top:888px;width:1px;height:103px;background:rgba(20,22,25,.45)"></div>
 <div class="abs" style="left:1437.4px;top:896px;width:60.1px;height:15px;line-height:15px;font-size:11.200px;color:#c9cbcd;text-align:center;white-space:nowrap">圆形度</div>
 <div class="abs" style="left:1437.4px;top:927.500px;width:60.1px;height:15px;line-height:15px;font-size:11.600px;color:#b4b6b8;text-align:center;white-space:nowrap;letter-spacing:-.1px">0.418</div>
 <div class="abs" style="left:1437.4px;top:959px;width:60.1px;height:15px;line-height:15px;font-size:11.600px;color:#b0b2b4;text-align:center;white-space:nowrap;letter-spacing:-.1px">0.397</div>
 <div class="abs" style="left:1557.1px;top:888px;width:1px;height:103px;background:rgba(20,22,25,.45)"></div>
 <div class="abs" style="left:1497.5px;top:896px;width:60.1px;height:15px;line-height:15px;font-size:11.200px;color:#c9cbcd;text-align:center;white-space:nowrap">矩形度</div>
 <div class="abs" style="left:1497.5px;top:927.500px;width:60.1px;height:15px;line-height:15px;font-size:11.600px;color:#b4b6b8;text-align:center;white-space:nowrap;letter-spacing:-.1px">0.637</div>
 <div class="abs" style="left:1497.5px;top:959px;width:60.1px;height:15px;line-height:15px;font-size:11.600px;color:#b0b2b4;text-align:center;white-space:nowrap;letter-spacing:-.1px">0.654</div>
 <div id="fade" class="abs"></div>
 <div class="abs" style="left:188px;top:158px;width:1594px;height:832.500px;border-left:1px solid #000;border-bottom:1px solid #000;pointer-events:none"></div>
 <!--CURSOR-->
 <svg class="abs" style="left:0;top:0" width="2000" height="1157" viewBox="0 0 2000 1157">
  <path d="M848.400 302.600v13.400l3.100-2.900 2.300 5.200 2-.9-2.300-5.100 4.300-.2z" fill="#fff" stroke="#111" stroke-width=".9" stroke-linejoin="round"/>
 </svg>
</div></div>
</body>
</html>
